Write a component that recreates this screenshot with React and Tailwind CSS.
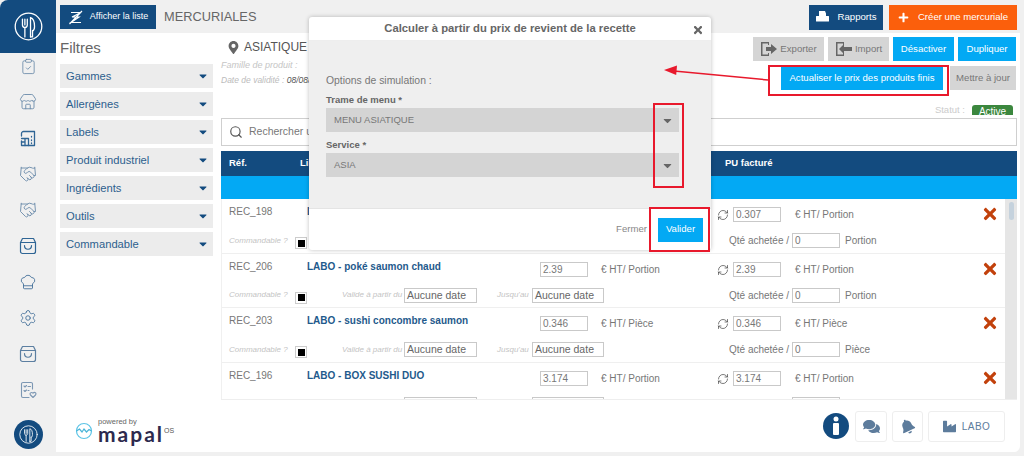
import React from "react";
import { ClipboardCheck, Store, Handshake, ChefHat, Settings, RefreshCw, Search } from "lucide-react";
import { FaPlus, FaMapMarkerAlt, FaTimes, FaComments, FaIndustry, FaBell, FaCaretDown } from "react-icons/fa";

const Cutlery = ({ s = 36 }) => (
  <svg width={s} height={s} viewBox="0 0 36 36" fill="none" stroke="#fff" strokeWidth="1.6" strokeLinecap="round">
    <circle cx="18" cy="18" r="16.5" />
    <path d="M10.5 9v7c0 2 1.3 3 3 3.4V31M16.5 9v7c0 2-1.3 3-3 3.4M13.5 9v7" />
    <path d="M20.5 31V7c3.5 1 5 5 5 11 0 3-1 5-2.5 5.500" />
    <path d="M23 23v8h-2.500" />
  </svg>
);

const Bag = ({ c = "#3f6f9c" }) => (
  <svg width="18" height="18" viewBox="0 0 18 18" fill="none" stroke={c} strokeWidth="1.2" strokeLinecap="round" strokeLinejoin="round">
    <path d="M3.500 1.500h11l2 4v9a2 2 0 0 1-2 2h-11a2 2 0 0 1-2-2v-9z" />
    <path d="M1.500 5.500h15M5.500 8.500c0 5 7 5 7 0" />
  </svg>
);

const Factsheet = () => (
  <svg width="17" height="17" viewBox="0 0 17 17" fill="none" stroke="#2f6595" strokeWidth="1.3" strokeLinecap="round" strokeLinejoin="round">
    <path d="M4 1.500h10.500v14H1.500V11M1.500 6V3.500a2 2 0 0 1 2-2" />
    <path d="M1.500 8.500h7v7M5 8.500v7M1.500 12h3.500M11.500 6.500v.5M11.500 10v.5M11.500 13v.5" />
  </svg>
);

const Wish = () => (
  <svg width="17" height="18" viewBox="0 0 17 18" fill="none" stroke="#7c97b3" strokeWidth="1.1" strokeLinecap="round" strokeLinejoin="round">
    <path d="M9 16.500H3a1.500 1.500 0 0 1-1.500-1.500V3A1.500 1.500 0 0 1 3 1.500h8A1.500 1.500 0 0 1 12.500 3v5" />
    <path d="M4 5l1 1 1.500-1.500M4 9.500l1 1 1.500-1.500M8 5.500h2.500M8 9.500h1" />
    <path d="M13 16.500l-2.500-2.500c-1.500-1.500 1-3.500 2.500-1.800 1.500-1.700 4-.3 2.500 1.800z" />
  </svg>
);

const sideItems = [
  <ClipboardCheck size={17} strokeWidth={1.2} className="text-[#6a8aa9]" />,
  <Store size={18} strokeWidth={1.2} className="text-[#6a8aa9]" />,
  <Factsheet />,
  <Handshake size={18} strokeWidth={1.2} className="text-[#6a8aa9]" />,
  <Handshake size={18} strokeWidth={1.2} className="text-[#6a8aa9]" />,
  <Bag c="#2f6595" />,
  <ChefHat size={18} strokeWidth={1.2} className="text-[#46729b]" />,
  <Settings size={18} strokeWidth={1.2} className="text-[#46729b]" />,
  <Bag c="#5c7fa1" />,
  <Wish />,
];

const Sidebar = () => (
  <aside className="w-[56px] shrink-0 h-full flex flex-col items-center">
    <div className="w-[56px] h-[53px] bg-[#134b7f] flex items-center justify-center rounded-tl-[8px] shrink-0">
      <Cutlery s={29} />
    </div>
    <div className="flex flex-col items-center w-full -mt-[5px]">
      {sideItems.map((icon, i) => (
        <div key={i} className="h-[36px] w-full flex items-center justify-center">{icon}</div>
      ))}
      <div className="mt-[12px] w-[29px] h-[29px] rounded-full bg-[#134b7f] flex items-center justify-center">
        <Cutlery s={19} />
      </div>
    </div>
  </aside>
);

const filters = ["Gammes", "Allergènes", "Labels", "Produit industriel", "Ingrédients", "Outils", "Commandable"];

const Filters = () => (
  <div className="w-[153px] shrink-0">
    <div className="text-[15px] leading-[20px] text-[#666] mt-[5px] mb-[6px]">Filtres</div>
    <div className="flex flex-col gap-[4px]">
      {filters.map((f) => (
        <div key={f} className="h-[24px] bg-[#ececec] flex items-center justify-between pl-[6px] pr-[4px] text-[11.2px] text-[#2c5f8e]">
          <span>{f}</span>
          <FaCaretDown size={12} className="text-[#134b7f]" />
        </div>
      ))}
    </div>
  </div>
);

const Btn = ({ cls, children }) => (
  <div className={"h-[24px] flex items-center justify-center text-[9.6px] " + cls}>{children}</div>
);

const Box = ({ w, v, cls = "" }) => (
  <div className={"h-[15px] shrink-0 border border-[#c9c9c9] bg-white pl-[2px] leading-[13px] text-[#777] " + cls} style={{ width: w }}>{v}</div>
);

const rows = [
  { ref: "REC_198", name: "LABO - salade", p: "0.307", u: "Portion" },
  { ref: "REC_206", name: "LABO - poké saumon chaud", p: "2.39", u: "Portion" },
  { ref: "REC_203", name: "LABO - sushi concombre saumon", p: "0.346", u: "Pièce" },
  { ref: "REC_196", name: "LABO - BOX SUSHI DUO", p: "3.174", u: "Portion" },
];

const Row = ({ r }) => (
  <div className="h-[54.6px] shrink-0 border-b border-[#efefef] text-[10px] text-[#777]">
    <div className="flex items-start pt-[7px] h-[34px]">
      <span className="w-[85px] pl-[7px] leading-[12px]">{r.ref}</span>
      <span className="w-[233px] font-bold text-[#1f5a8c] leading-[12px]">{r.name}</span>
      <Box w={48} v={r.p} cls="mt-[1px] text-[10px]" />
      <span className="ml-[13px] w-[116px] leading-[14px] mt-[2px]">€ HT/ {r.u}</span>
      <RefreshCw size={12} strokeWidth={1.4} className="mt-[3px] mr-[4px] text-[#444]" />
      <Box w={48} v={r.p} cls="mt-[1px] text-[10px]" />
      <span className="ml-[14px] w-[186px] leading-[14px] mt-[2px]">€ HT/ {r.u}</span>
      <FaTimes size={18} className="text-[#c2410c] -mt-[1px]" />
    </div>
    <div className="flex items-center h-[15px]">
      <span className="w-[73px] pl-[7px] italic text-[8px] text-[#c4c4c4] whitespace-nowrap">Commandable ?</span>
      <span className="w-[12px] h-[12px] border border-[#ccc] bg-white flex items-center justify-center mt-[5px]"><span className="w-[7px] h-[7px] bg-black" /></span>
      <span className="ml-[35px] w-[62px] italic text-[8px] text-[#c4c4c4] whitespace-nowrap">Valide à partir du</span>
      <Box w={73} v="Aucune date" cls="text-[10.5px] !text-[#666]" />
      <span className="ml-[20px] w-[35px] italic text-[8px] text-[#c4c4c4]">Jusqu'au</span>
      <Box w={72} v="Aucune date" cls="text-[10.5px] !text-[#666]" />
      <span className="ml-[125px] w-[63px] whitespace-nowrap">Qté achetée /</span>
      <Box w={48} v="0" cls="text-[10px]" />
      <span className="ml-[5px]">{r.u}</span>
    </div>
  </div>
);

const Table = () => (
  <div className="mt-[5px] h-[249px] overflow-hidden border-b border-[#eee]">
    <div className="h-[25px] bg-[#134b7f] flex items-center text-[9.5px] font-bold text-white">
      <span className="w-[79px] pl-[8px]">Réf.</span>
      <span className="w-[425px]">Libellé</span>
      <span>PU facturé</span>
    </div>
    <div className="h-[23px] bg-[#03a9f4]" />
    <div className="flex h-[201px]">
      <div className="flex-1 flex flex-col border-l border-[#f0f0f0] overflow-hidden min-w-0">
        {rows.map((r) => <Row key={r.ref} r={r} />)}
      </div>
      <div className="w-[12px] bg-[#e6e6e6] pt-[3px] flex justify-center shrink-0">
        <div className="w-[5px] h-[18px] rounded-full bg-[#c5d2dd]" />
      </div>
    </div>
  </div>
);

const Right = () => (
  <div className="flex-1 min-w-0 ml-[8px] mr-[3px]">
    <div className="flex justify-between h-[33px]">
      <div className="pt-[6px]">
        <div className="flex items-center gap-[4px] text-[12px] text-[#555] leading-[16px] ml-[6px]">
          <FaMapMarkerAlt size={13} className="text-[#666]" />
          <span>ASIATIQUE</span>
        </div>
        <div className="italic text-[9px] text-[#c5c5c5] mt-[4px] leading-[12px]">Famille de produit :</div>
        <div className="italic text-[8.5px] text-[#bbb] mt-[3px] leading-[12px] whitespace-nowrap">Date de validité : <span className="text-[#555]">08/08/2022</span></div>
      </div>
      <div className="flex gap-[4px] pt-[4px] pr-[1px] items-start">
        <Btn cls="w-[71px] bg-[#d5d5d5] text-[#777] gap-[2px]">
          <svg width="18" height="16" viewBox="0 0 18 16" fill="#666"><path d="M1 1h8v3H8V2.500H2.500v11H8V12h1v3H1z" /><path d="M6 6h5V3l6 5-6 5v-3H6z" /></svg>Exporter
        </Btn>
        <Btn cls="w-[61px] bg-[#d5d5d5] text-[#777] gap-[2px]">
          <svg width="18" height="16" viewBox="0 0 18 16" fill="#666"><path d="M1 1h8v3H8V2.500H2.500v11H8V12h1v3H1z" /><path d="M17 6h-8V3L4 8l5 5v-3h8z" /></svg>Import
        </Btn>
        <Btn cls="w-[61px] bg-[#03a9f4] text-white">Désactiver</Btn>
        <Btn cls="w-[58px] bg-[#03a9f4] text-white">Dupliquer</Btn>
      </div>
    </div>
    <div className="flex justify-end h-[24px] pr-[1px]">
      <Btn cls="w-[162px] bg-[#03a9f4] text-white mr-[7px]">Actualiser le prix des produits finis</Btn>
      <Btn cls="w-[66px] bg-[#d5d5d5] text-[#777]">Mettre à jour</Btn>
    </div>
    <div className="h-[28px] flex justify-end items-end pr-[4px] pb-[3px]">
      <span className="text-[9.5px] text-[#ccc] mr-[7px] leading-[12px] mb-[-1px]">Statut :</span>
      <span className="w-[41px] h-[10px] bg-[#3b873e] rounded-t-[3px] text-white text-[10px] leading-[13px] text-center overflow-hidden">Active</span>
    </div>
    <div className="h-[28px] border border-[#cfcfcf] flex items-center pl-[7px] gap-[6px] text-[10.5px] text-[#777]">
      <Search size={14} strokeWidth={2} className="text-[#555]" />
      <span>Rechercher un produit</span>
    </div>
    <Table />
  </div>
);

const Footer = () => (
  <div className="flex justify-between items-center h-[52px] pl-[19px] pr-[15px]">
    <div className="flex items-center gap-[5px] mt-[8px]">
      <svg width="18" height="18" viewBox="0 0 18 18" fill="none" stroke="#5cc4e6" strokeWidth="1.2" className="mt-[2px]"><circle cx="9" cy="9" r="7.500" /><path d="M1.500 9l3-2 2.500 3 2-3 2.500 3 2.500-2.500 2.500 1.500" stroke="#4ab5d8" /></svg>
      <div className="flex flex-col">
        <span className="text-[7.5px] leading-[8px] text-[#666]">powered by</span>
        <div className="flex items-start text-[#2d2a4e]">
          <span className="font-['Lato',sans-serif] font-bold text-[21px] leading-[16px] tracking-[2px]">mapal</span>
          <span className="text-[7px] leading-[10px] text-[#555]">OS</span>
        </div>
      </div>
    </div>
    <div className="flex items-center gap-[5px]">
      <div className="w-[26px] h-[26px] rounded-full bg-[#134b7f] flex items-center justify-center">
        <svg width="10" height="20" viewBox="0 0 10 20" fill="#fff"><circle cx="5" cy="3" r="2.500" /><rect x="2" y="7" width="6" height="12" rx="1" /></svg>
      </div>
      <div className="w-[32px] h-[31px] rounded-[3px] border border-[#eee] flex items-center justify-center ml-[1px]"><FaComments size={17} className="text-[#5d7c9c]" /></div>
      <div className="w-[31px] h-[31px] rounded-[3px] border border-[#eee] flex items-center justify-center"><FaBell size={15} className="text-[#5d7c9c] -rotate-[25deg]" /></div>
      <div className="w-[77px] h-[31px] rounded-[3px] border border-[#eee] flex items-center justify-center gap-[6px] text-[10px] tracking-[0.4px] text-[#5d7c9c]"><FaIndustry size={13} />LABO</div>
    </div>
  </div>
);

const Modal = () => (
  <div className="absolute left-[309px] top-[17px] w-[402px] h-[233px] rounded-[3px] bg-white shadow-[0_0_4px_rgba(0,0,0,0.25)] flex flex-col overflow-hidden">
    <div className="h-[24px] shrink-0 flex items-center justify-center relative text-[11.25px] font-bold text-[#666] border-b border-[#eee]">
      Calculer à partir du prix de revient de la recette
      <FaTimes size={12} className="absolute right-[7px] top-[7px] text-[#666]" />
    </div>
    <div className="h-[168px] shrink-0 bg-[#efefef] pl-[17px] pr-[32px] pt-[33px] border-b border-[#e4e4e4]">
      <div className="text-[10.4px] leading-[14px] text-[#777]">Options de simulation :</div>
      <div className="mt-[5px] text-[9.5px] leading-[14px] font-bold text-[#666]">Trame de menu *</div>
      <div className="mt-[1px] h-[24px] bg-[#d4d4d4] flex items-center justify-between pl-[8px] pr-[5px] text-[9.5px] text-[#777]">MENU ASIATIQUE<FaCaretDown size={13} className="text-[#666]" /></div>
      <div className="mt-[6px] text-[9.5px] leading-[14px] font-bold text-[#666]">Service *</div>
      <div className="mt-[1px] h-[24px] bg-[#d4d4d4] flex items-center justify-between pl-[8px] pr-[5px] text-[9.5px] text-[#777]">ASIA<FaCaretDown size={13} className="text-[#666]" /></div>
    </div>
    <div className="flex-1 flex items-center justify-end pr-[8px] gap-[11px]">
      <span className="text-[9.6px] text-[#888]">Fermer</span>
      <div className="w-[45px] h-[24px] bg-[#03a9f4] text-white text-[9.6px] flex items-center justify-center">Valider</div>
    </div>
  </div>
);

const Annotations = () => (
  <>
    <div className="absolute left-[653px] top-[103px] w-[31px] h-[85px] border-2 border-[#e8192c]" />
    <div className="absolute left-[649px] top-[207px] w-[61px] h-[45px] border-2 border-[#e8192c]" />
    <div className="absolute left-[768px] top-[65px] w-[181px] h-[31px] border-2 border-[#e8192c]" />
    <svg className="absolute left-[660px] top-[60px]" width="112" height="24" viewBox="0 0 112 24">
      <line x1="108" y1="20" x2="14" y2="11" stroke="#e8192c" strokeWidth="1.5" />
      <path d="M4 10l13-4.500-.8 9.500z" fill="#e8192c" />
    </svg>
  </>
);

export default function App() {
  return (
    <div className="relative w-[1024px] h-[456px] bg-[#f0f0f0] flex overflow-hidden font-['Liberation_Sans',Arial,sans-serif]">
      <Sidebar />
      <div className="flex-1 min-w-0 flex flex-col h-[452px] mr-[4px]">
        <header className="h-[33px] shrink-0 flex items-center justify-between pl-[4px] pr-[3px] pt-[1px]">
          <div className="flex items-center">
            <div className="w-[96px] h-[24px] bg-[#134b7f] text-white text-[9px] flex items-center justify-center gap-[7px]">
              <svg width="15" height="15" viewBox="0 0 15 15" fill="none" stroke="#fff" strokeWidth="1.2"><path d="M3 2.500h10L4 7h7l-8 5.500h10M1.500 14L14 1" /></svg>
              Afficher la liste
            </div>
            <span className="ml-[8px] text-[12.8px] text-[#666]">MERCURIALES</span>
          </div>
          <div className="flex items-center gap-[6px]">
            <div className="w-[74px] h-[25px] bg-[#134b7f] text-white text-[9.6px] flex items-center justify-center gap-[9px]">
              <svg width="13" height="12" viewBox="0 0 13 12" fill="#fff"><path d="M3 0h6l1 2.500v3H3zM.5 5h12a.5.5 0 0 1 .5.5V10a.5.5 0 0 1-.5.500H.5A.5.5 0 0 1 0 10V5.500A.5.5 0 0 1 .5 5z" /></svg>
              Rapports
            </div>
            <div className="w-[128px] h-[25px] bg-[#fb5f0c] text-white text-[9.6px] flex items-center justify-center gap-[9px]"><FaPlus size={11} />Créer une mercuriale</div>
          </div>
        </header>
        <main className="flex-1 min-h-0 bg-white rounded-br-[6px] flex flex-col">
          <div className="flex pl-[4px] h-[367px]">
            <Filters />
            <Right />
          </div>
          <Footer />
        </main>
      </div>
      <Modal />
      <Annotations />
    </div>
  );
}
